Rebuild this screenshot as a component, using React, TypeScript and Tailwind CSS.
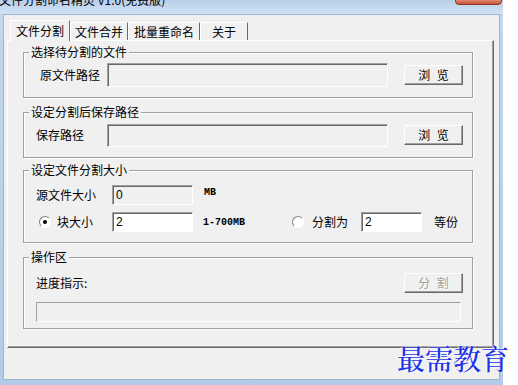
const sunken =
  "border border-t-[#a0a0a0] border-l-[#a0a0a0] border-b-white border-r-white shadow-[inset_1px_1px_0_#696969]";
const raised =
  "border border-t-white border-l-white border-b-[#696969] border-r-[#696969] shadow-[inset_-1px_-1px_0_#a0a0a0]";

function Group({ title, className, children }: { title: string; className: string; children: React.ReactNode }) {
  return (
    <div
      className={`relative ml-[15px] w-[450px] border border-[#a0a0a0] shadow-[inset_1px_1px_0_#fff,1px_1px_0_#fff] ${className}`}
    >
      <span className="absolute -top-[8px] left-[5px] bg-[#f0f0f0] px-[2px] text-[12px] leading-[14px]">{title}</span>
      {children}
    </div>
  );
}

function Button({ label, disabled }: { label: string; disabled?: boolean }) {
  return (
    <div
      className={`flex h-[20px] w-[59px] items-center justify-center bg-[#f0f0f0] text-[12px] whitespace-pre [word-spacing:4px] ${raised} ${
        disabled ? "text-[#a0a0a0] [text-shadow:1px_1px_0_#fff]" : "text-black"
      }`}
    >
      {label}
    </div>
  );
}

function Radio({ checked }: { checked?: boolean }) {
  return (
    <div className="flex h-[12px] w-[12px] items-center justify-center rounded-full border border-[#808080] border-b-white border-r-white bg-white">
      {checked && <div className="h-[4px] w-[4px] rounded-full bg-black" />}
    </div>
  );
}

const tabs = [
  { label: "文件分割", w: "w-[60px]", active: true },
  { label: "文件合并", w: "w-[58px]" },
  { label: "批量重命名", w: "w-[72px]" },
  { label: "关于", w: "w-[48px]" },
];

export default function App() {
  return (
    <div className="relative h-[385px] w-[518px] overflow-hidden bg-white font-['Noto_Sans_CJK_SC','Noto_Sans',sans-serif] text-black">
      <div className="flex h-[385px] w-[503px] flex-col bg-gradient-to-b from-[#c3d7ee] to-[#b3cbe8]">
        {/* title bar, mostly scrolled off */}
        <div className="flex h-[14px] justify-between overflow-hidden bg-gradient-to-b from-[#b8cfea] to-[#d2e2f4]">
          <div className="-ml-[1px] -mt-[7px] text-[12px] leading-[14px]">文件分割命名精灵 V1.0(免费版)</div>
          <div className="mr-[1px] -mt-[2px] h-[7px] w-[47px] rounded-b-[4px] border border-[#8a3a2c] bg-gradient-to-b from-[#e7967f] to-[#c8523a]" />
        </div>

        <div className="mx-[3px] flex flex-1 flex-col border border-[#9fb4cf] bg-[#f0f0f0]">
          {/* tabs */}
          <div className="ml-[6px] mt-[5px] flex h-[20px] items-end">
            {tabs.map((t) => (
              <div
                key={t.label}
                className={`${t.w} flex items-center justify-center border-l border-t border-r border-l-white border-t-white border-r-[#696969] bg-[#f0f0f0] text-[12px] ${
                  t.active ? "relative z-10 -mb-px h-[21px]" : "h-[18px]"
                }`}
              >
                {t.label}
              </div>
            ))}
          </div>

          {/* tab panel */}
          <div className="ml-[3px] flex h-[308px] w-[487px] flex-col border border-t-white border-l-white border-b-[#696969] border-r-[#696969] shadow-[inset_-1px_-1px_0_#a0a0a0]">
            <Group title="选择待分割的文件" className="mt-[11px] h-[46px]">
              <div className="flex h-full items-center pl-[16px] pr-[9px]">
                <span className="w-[67px] text-[12px]">原文件路径</span>
                <div className={`h-[24px] w-[281px] bg-[#f0f0f0] ${sunken}`} />
                <div className="ml-auto">
                  <Button label="浏 览" />
                </div>
              </div>
            </Group>

            <Group title="设定分割后保存路径" className="mt-[14px] h-[46px]">
              <div className="flex h-full items-center pl-[12px] pr-[9px]">
                <span className="w-[71px] text-[12px]">保存路径</span>
                <div className={`h-[23px] w-[281px] bg-[#f0f0f0] ${sunken}`} />
                <div className="ml-auto">
                  <Button label="浏 览" />
                </div>
              </div>
            </Group>

            <Group title="设定文件分割大小" className="mt-[12px] h-[73px]">
              <div className="flex flex-col gap-[7px] pt-[14px]">
                <div className="flex h-[20px] items-center pl-[12px]">
                  <span className="w-[76px] text-[12px]">源文件大小</span>
                  <div className={`flex h-[20px] w-[81px] items-center bg-[#f0f0f0] pl-[3px] font-['Liberation_Sans',sans-serif] text-[12px] ${sunken}`}>
                    0
                  </div>
                  <span className="mb-[6px] ml-[11px] font-['Liberation_Mono',monospace] text-[10px] font-bold">MB</span>
                </div>
                <div className="flex h-[20px] items-center pl-[15px]">
                  <Radio checked />
                  <span className="ml-[6px] w-[55px] text-[12px]">块大小</span>
                  <div className={`flex h-[20px] w-[81px] items-center bg-white pl-[3px] font-['Liberation_Sans',sans-serif] text-[12px] ${sunken}`}>
                    2
                  </div>
                  <span className="ml-[10px] w-[89px] font-['Liberation_Mono',monospace] text-[10px] font-bold">1-700MB</span>
                  <Radio />
                  <span className="ml-[8px] w-[49px] text-[12px]">分割为</span>
                  <div className={`flex h-[20px] w-[61px] items-center bg-white pl-[3px] font-['Liberation_Sans',sans-serif] text-[12px] ${sunken}`}>
                    2
                  </div>
                  <span className="ml-[12px] text-[12px]">等份</span>
                </div>
              </div>
            </Group>

            <Group title="操作区" className="mt-[14px] h-[72px]">
              <div className="flex flex-col pt-[15px]">
                <div className="flex h-[20px] items-center justify-between pl-[12px] pr-[9px]">
                  <span className="text-[12px]">进度指示:</span>
                  <Button label="分 割" disabled />
                </div>
                <div className="ml-[12px] mt-[9px] h-[20px] w-[425px] border border-t-[#a0a0a0] border-l-[#a0a0a0] border-b-white border-r-white bg-[#f0f0f0]" />
              </div>
            </Group>
          </div>
        </div>
        <div className="h-[5px]" />
      </div>

      {/* watermark */}
      <div className="absolute left-[397px] top-[340px] font-['Noto_Serif_CJK_SC','Noto_Sans_CJK_SC',serif] text-[28px] font-medium leading-[36px] text-[#1f33e6] [text-shadow:0_0_2px_#fff,0_0_2px_#fff]">
        最需教育
      </div>
    </div>
  );
}
